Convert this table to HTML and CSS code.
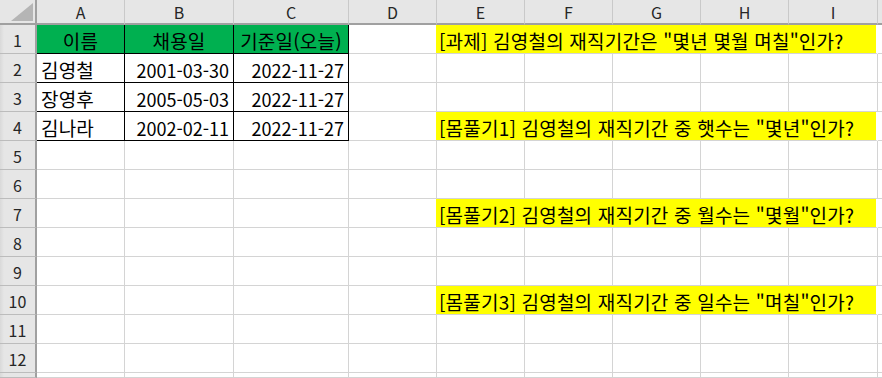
FILE: index.html
```html
<!DOCTYPE html>
<html lang="ko">
<head>
<meta charset="utf-8">
<title>재직기간</title>
<link rel="stylesheet" href="styles.css">
</head>
<body>
<div class="sheet">
  <div class="ch corner"><svg class="tri" width="22" height="18" viewBox="0 0 22 18"><polygon points="22,0 22,18 0,18" fill="#b5b5b5"/></svg></div>
  <div class="ch">A</div><div class="ch">B</div><div class="ch">C</div><div class="ch">D</div><div class="ch">E</div><div class="ch">F</div><div class="ch">G</div><div class="ch">H</div><div class="ch">I</div><div class="ch last"></div>

  <div class="rh">1</div>
  <div class="c tb hd ko">이름</div><div class="c tb hd ko">채용일</div><div class="c tb hd ko">기준일(오늘)</div><div class="c"></div>
  <div class="c note ko">[과제] 김영철의 재직기간은 "몇년 몇월 며칠"인가?</div><div class="c"></div>

  <div class="rh">2</div>
  <div class="c tb ko">김영철</div><div class="c tb num">2001-03-30</div><div class="c tb num">2022-11-27</div><div class="c"></div>
  <div class="c"></div><div class="c"></div><div class="c"></div><div class="c"></div><div class="c"></div><div class="c"></div>

  <div class="rh">3</div>
  <div class="c tb ko">장영후</div><div class="c tb num">2005-05-03</div><div class="c tb num">2022-11-27</div><div class="c"></div>
  <div class="c"></div><div class="c"></div><div class="c"></div><div class="c"></div><div class="c"></div><div class="c"></div>

  <div class="rh">4</div>
  <div class="c tb ko">김나라</div><div class="c tb num">2002-02-11</div><div class="c tb num">2022-11-27</div><div class="c"></div>
  <div class="c note ko">[몸풀기1] 김영철의 재직기간 중 햇수는 "몇년"인가?</div><div class="c"></div>

  <div class="rh">5</div>
  <div class="c"></div><div class="c"></div><div class="c"></div><div class="c"></div><div class="c"></div><div class="c"></div><div class="c"></div><div class="c"></div><div class="c"></div><div class="c"></div>

  <div class="rh">6</div>
  <div class="c"></div><div class="c"></div><div class="c"></div><div class="c"></div><div class="c"></div><div class="c"></div><div class="c"></div><div class="c"></div><div class="c"></div><div class="c"></div>

  <div class="rh">7</div>
  <div class="c"></div><div class="c"></div><div class="c"></div><div class="c"></div>
  <div class="c note ko">[몸풀기2] 김영철의 재직기간 중 월수는 "몇월"인가?</div><div class="c"></div>

  <div class="rh">8</div>
  <div class="c"></div><div class="c"></div><div class="c"></div><div class="c"></div><div class="c"></div><div class="c"></div><div class="c"></div><div class="c"></div><div class="c"></div><div class="c"></div>

  <div class="rh">9</div>
  <div class="c"></div><div class="c"></div><div class="c"></div><div class="c"></div><div class="c"></div><div class="c"></div><div class="c"></div><div class="c"></div><div class="c"></div><div class="c"></div>

  <div class="rh">10</div>
  <div class="c"></div><div class="c"></div><div class="c"></div><div class="c"></div>
  <div class="c note ko">[몸풀기3] 김영철의 재직기간 중 일수는 "며칠"인가?</div><div class="c"></div>

  <div class="rh">11</div>
  <div class="c"></div><div class="c"></div><div class="c"></div><div class="c"></div><div class="c"></div><div class="c"></div><div class="c"></div><div class="c"></div><div class="c"></div><div class="c"></div>

  <div class="rh">12</div>
  <div class="c"></div><div class="c"></div><div class="c"></div><div class="c"></div><div class="c"></div><div class="c"></div><div class="c"></div><div class="c"></div><div class="c"></div><div class="c"></div>

  <div class="rh"></div>
  <div class="c"></div><div class="c"></div><div class="c"></div><div class="c"></div><div class="c"></div><div class="c"></div><div class="c"></div><div class="c"></div><div class="c"></div><div class="c"></div>
</div>
</body>
</html>
```

FILE: styles.css
```css
html, body {
  margin: 0;
  padding: 0;
  background: #ffffff;
}
body {
  width: 882px;
  height: 378px;
  overflow: hidden;
  font-family: "Noto Sans CJK KR", "Noto Sans", sans-serif;
  color: #000;
}
.sheet {
  display: grid;
  grid-template-columns: 37px 88px 109px 115px 88px 88px 88px 88px 88px 89px 1fr;
  grid-template-rows: 25px repeat(12, 29px) 1fr;
  width: 882px;
  height: 378px;
  overflow: hidden;
}
.sheet > div {
  box-sizing: border-box;
  display: flex;
  align-items: center;
  overflow: visible;
  white-space: nowrap;
  line-height: 1;
}
.ch {
  background: #e6e6e6;
  border-right: 1px solid #c9c9c9;
  border-bottom: 2px solid #a0a0a0;
  justify-content: center;
  font-size: 16px;
  color: #262626;
  padding-top: 1px;
}
.ch.last {
  border-right: none;
}
.corner {
  border-right: 2px solid #a0a0a0 !important;
  justify-content: flex-end !important;
  align-items: flex-end !important;
  padding: 0 2px 2px 0;
}
.tri {
  display: block;
}
.rh {
  background: linear-gradient(to right, #d9d9d9 0px, #e6e6e6 4px, #e6e6e6 100%);
  border-right: 2px solid #a0a0a0;
  border-bottom: 1px solid #bcbcbc;
  justify-content: center;
  font-size: 16px;
  color: #262626;
  padding-top: 2px;
}
.c {
  border-right: 1px solid #d4d4d4;
  border-bottom: 1px solid #d4d4d4;
  font-size: 18px;
  padding: 3px 4px 0 4px;
}
.c.ko {
  font-size: 19px;
  letter-spacing: 0.2px;
}
.c.tb {
  border-right-color: #000;
  border-bottom-color: #000;
}
.c.hd {
  background: #00b050;
  justify-content: center;
}
.c.num {
  justify-content: flex-end;
  padding-right: 4px;
}
.c.note {
  grid-column: span 5;
  background: #ffff00;
  border-right: 2px solid #ffffff;
  border-bottom-color: #d4d4d4;
  padding-left: 3px;
  margin-left: -1px;
}
```
